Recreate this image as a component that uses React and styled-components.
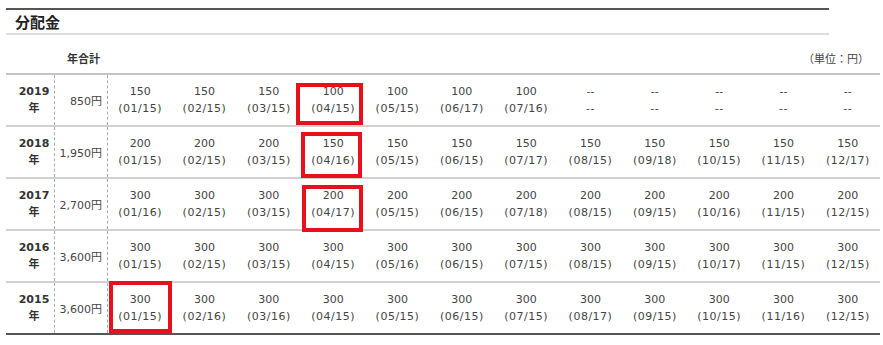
import React from 'react';
import styled, { createGlobalStyle } from 'styled-components';

const GlobalStyle = createGlobalStyle`
  body {
    margin: 0;
    background: #fff;
    font-family: "DejaVu Sans", "Noto Sans CJK JP", sans-serif;
    color: #333;
  }
`;

const Page = styled.div`
  padding: 8px 3px 0 6px;
  width: 874px;
`;

const Heading = styled.div`
  width: 823px;
  border-top: 2px solid #555;
  border-bottom: 2px solid #ddd;
  height: 23px;
  display: flex;
  align-items: center;
  padding-left: 9px;
  box-sizing: content-box;
  margin-right: 51px;
  width: 814px;
`;

const Title = styled.h2`
  margin: 0;
  font-size: 15px;
  font-weight: bold;
  color: #222;
  font-family: "Noto Sans CJK JP", sans-serif;
`;

const Caption = styled.div`
  display: grid;
  grid-template-columns: 49px 53px 1fr;
  align-items: end;
  height: 38px;
  padding-bottom: 7px;
  box-sizing: border-box;
  font-size: 11px;
  font-family: "Noto Sans CJK JP", sans-serif;
`;

const CaptionLabel = styled.span`
  grid-column: 2;
  text-align: center;
  font-weight: bold;
  padding-left: 4px;
`;

const Unit = styled.span`
  grid-column: 3;
  text-align: right;
  padding-right: 11px;
  color: #444;
`;

const Table = styled.div`
  border-top: 2px solid #c4c4c4;
  border-bottom: 2px solid #555;
`;

const Row = styled.div`
  display: grid;
  grid-template-columns: 49px 53px repeat(12, 1fr);
  height: 50px;
  border-bottom: ${p => (p.$last ? 'none' : '2px solid #d0d0d0')};
`;

const YearCell = styled.div`
  display: flex;
  flex-direction: column;
  align-items: center;
  justify-content: center;
  padding-left: 8px;
  font-size: 11px;
  font-weight: bold;
  line-height: 17px;
  color: #333;
  border-right: 1px dashed #aaa;
`;

const TotalCell = styled.div`
  display: flex;
  align-items: center;
  justify-content: flex-end;
  padding-right: 5px;
  font-size: 11px;
  color: #444;
  border-right: 1px dashed #aaa;
`;

const PayCell = styled.div`
  position: relative;
  display: flex;
  flex-direction: column;
  align-items: center;
  justify-content: center;
  font-size: 11px;
  line-height: 17px;
  color: #444;
`;

const Date = styled.span`
  letter-spacing: 0.5px;
`;

const Mark = styled.div`
  position: absolute;
  top: ${p => p.$box[0]}px;
  right: ${p => p.$box[1]}px;
  bottom: ${p => p.$box[2]}px;
  left: ${p => p.$box[3]}px;
  border: 4px solid #e8101c;
  pointer-events: none;
`;

const rows = [
  {
    year: 2019,
    total: '850円',
    mark: { col: 3, box: [8, 2, 0, -5] },
    pays: [
      ['150', '01/15'], ['150', '02/15'], ['150', '03/15'], ['100', '04/15'],
      ['100', '05/15'], ['100', '06/17'], ['100', '07/16'],
      null, null, null, null, null,
    ],
  },
  {
    year: 2018,
    total: '1,950円',
    mark: { col: 3, box: [5, 3, -1, 0] },
    pays: [
      ['200', '01/15'], ['200', '02/15'], ['200', '03/15'], ['150', '04/16'],
      ['150', '05/15'], ['150', '06/15'], ['150', '07/17'], ['150', '08/15'],
      ['150', '09/18'], ['150', '10/15'], ['150', '11/15'], ['150', '12/17'],
    ],
  },
  {
    year: 2017,
    total: '2,700円',
    mark: { col: 3, box: [6, 2, -3, 1] },
    pays: [
      ['300', '01/16'], ['300', '02/15'], ['300', '03/15'], ['200', '04/17'],
      ['200', '05/15'], ['200', '06/15'], ['200', '07/18'], ['200', '08/15'],
      ['200', '09/15'], ['200', '10/16'], ['200', '11/15'], ['200', '12/15'],
    ],
  },
  {
    year: 2016,
    total: '3,600円',
    pays: [
      ['300', '01/15'], ['300', '02/15'], ['300', '03/15'], ['300', '04/15'],
      ['300', '05/16'], ['300', '06/15'], ['300', '07/15'], ['300', '08/15'],
      ['300', '09/15'], ['300', '10/17'], ['300', '11/15'], ['300', '12/15'],
    ],
  },
  {
    year: 2015,
    total: '3,600円',
    mark: { col: 0, box: [-2, 0, 0, 1] },
    pays: [
      ['300', '01/15'], ['300', '02/16'], ['300', '03/16'], ['300', '04/15'],
      ['300', '05/15'], ['300', '06/15'], ['300', '07/15'], ['300', '08/17'],
      ['300', '09/15'], ['300', '10/15'], ['300', '11/16'], ['300', '12/15'],
    ],
  },
];

export default function App() {
  return (
    <Page>
      <GlobalStyle />
      <Heading>
        <Title>分配金</Title>
      </Heading>
      <Caption>
        <CaptionLabel>年合計</CaptionLabel>
        <Unit>（単位：円）</Unit>
      </Caption>
      <Table>
        {rows.map((r, i) => (
          <Row key={r.year} $last={i === rows.length - 1}>
            <YearCell>
              <span>{r.year}</span>
              <span>年</span>
            </YearCell>
            <TotalCell>{r.total}</TotalCell>
            {r.pays.map((p, j) => (
              <PayCell key={j}>
                <span>{p ? p[0] : '--'}</span>
                <Date>{p ? `(${p[1]})` : '--'}</Date>
                {r.mark && r.mark.col === j && <Mark $box={r.mark.box} />}
              </PayCell>
            ))}
          </Row>
        ))}
      </Table>
    </Page>
  );
}
